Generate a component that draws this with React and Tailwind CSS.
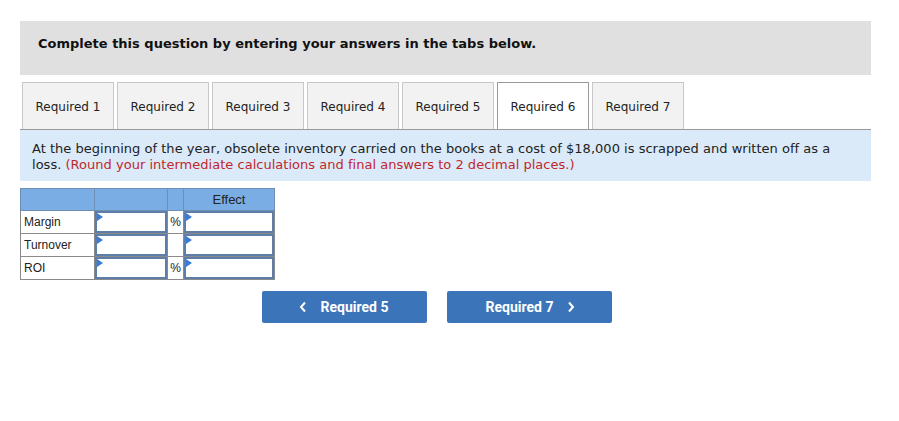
import React from "react";

const tabs = ["Required 1","Required 2","Required 3","Required 4","Required 5","Required 6","Required 7"];

function Flag() {
  return <span className="absolute left-0 top-0 w-0 h-0 border-t-[4px] border-b-[4px] border-l-[6px] border-t-transparent border-b-transparent border-l-[#3a7bd5]" />;
}

function InputCell({ w }) {
  return (
    <td className={`p-0 border border-[#8a8a8a] bg-white ${w}`}>
      <div className="relative h-[22px] border-2 border-[#5c7ea8] bg-white">
        <Flag />
      </div>
    </td>
  );
}

export default function App() {
  const rows = [
    { label: "Margin", pct: true },
    { label: "Turnover", pct: false },
    { label: "ROI", pct: true },
  ];
  return (
    <div className="w-[899px] h-[421px] bg-white pt-[21px]" style={{ fontFamily: "Verdana, 'DejaVu Sans', sans-serif" }}>
      <div className="ml-[20px] w-[851px]">
        <div className="h-[54px] bg-[#e0e0e0] pl-[18px] pt-[15px]">
          <p className="text-[13px] font-bold text-[#111] leading-[16px]">
            Complete this question by entering your answers in the tabs below.
          </p>
        </div>
        <div className="mt-[7px] flex gap-[3px] pl-[2px] border-b border-[#9a9a9a]">
          {tabs.map((t, i) => (
            <div
              key={t}
              className={`w-[92px] h-[47px] flex items-center justify-center pt-[2px] border border-b-0 text-[12px] text-[#222] ${i === 5 ? "bg-white border-[#9a9a9a]" : "bg-[#f2f2f2] border-[#c8c8c8]"}`}
            >
              {t}
            </div>
          ))}
        </div>
        <div className="h-[51px] bg-[#dbeaf8] pl-[12px] pr-[20px] pt-[11px] text-[13px] leading-[16px] text-[#222] tracking-[0.02px]">
          At the beginning of the year, obsolete inventory carried on the books at a cost of $18,000 is scrapped and written off as a loss.{" "}
          <span className="text-[#c0272d]">(Round your intermediate calculations and final answers to 2 decimal places.)</span>
        </div>
        <table className="mt-[7px] border-collapse text-[12px] text-[#222]" style={{ fontFamily: "Arial, 'Liberation Sans', sans-serif" }}>
          <thead>
            <tr className="h-[22px] bg-[#7aade3]">
              <th className="w-[74px] border border-[#6d8fb3] p-0"></th>
              <th className="w-[73px] border border-[#6d8fb3] p-0"></th>
              <th className="w-[16px] border border-[#6d8fb3] p-0"></th>
              <th className="w-[91px] border border-[#6d8fb3] p-0 font-normal text-[13px] text-[#222] text-center">Effect</th>
            </tr>
          </thead>
          <tbody>
            {rows.map((r) => (
              <tr key={r.label} className="h-[23px]">
                <td className="border border-[#8a8a8a] px-[3px] py-0 text-left">{r.label}</td>
                <InputCell w="w-[73px]" />
                <td className="border border-[#8a8a8a] p-0 text-center text-[12px]">{r.pct ? "%" : ""}</td>
                <InputCell w="w-[91px]" />
              </tr>
            ))}
          </tbody>
        </table>
        <div className="mt-[11px] ml-[242px] flex gap-[20px]" style={{ fontFamily: "Roboto, Arial, sans-serif" }}>
          <button className="w-[165px] h-[32px] rounded-[2px] bg-[#3b74b9] text-white text-[14px] font-bold flex items-center justify-center gap-[14px] pr-[2px]">
            <svg width="8" height="12" viewBox="0 0 8 12"><path d="M6 1.5 L2 6 L6 10.5" stroke="white" strokeWidth="2" fill="none" /></svg>
            <span>Required 5</span>
          </button>
          <button className="w-[165px] h-[32px] rounded-[2px] bg-[#3b74b9] text-white text-[14px] font-bold flex items-center justify-center gap-[14px] pl-[2px]">
            <span>Required 7</span>
            <svg width="8" height="12" viewBox="0 0 8 12"><path d="M2 1.5 L6 6 L2 10.5" stroke="white" strokeWidth="2" fill="none" /></svg>
          </button>
        </div>
      </div>
    </div>
  );
}
